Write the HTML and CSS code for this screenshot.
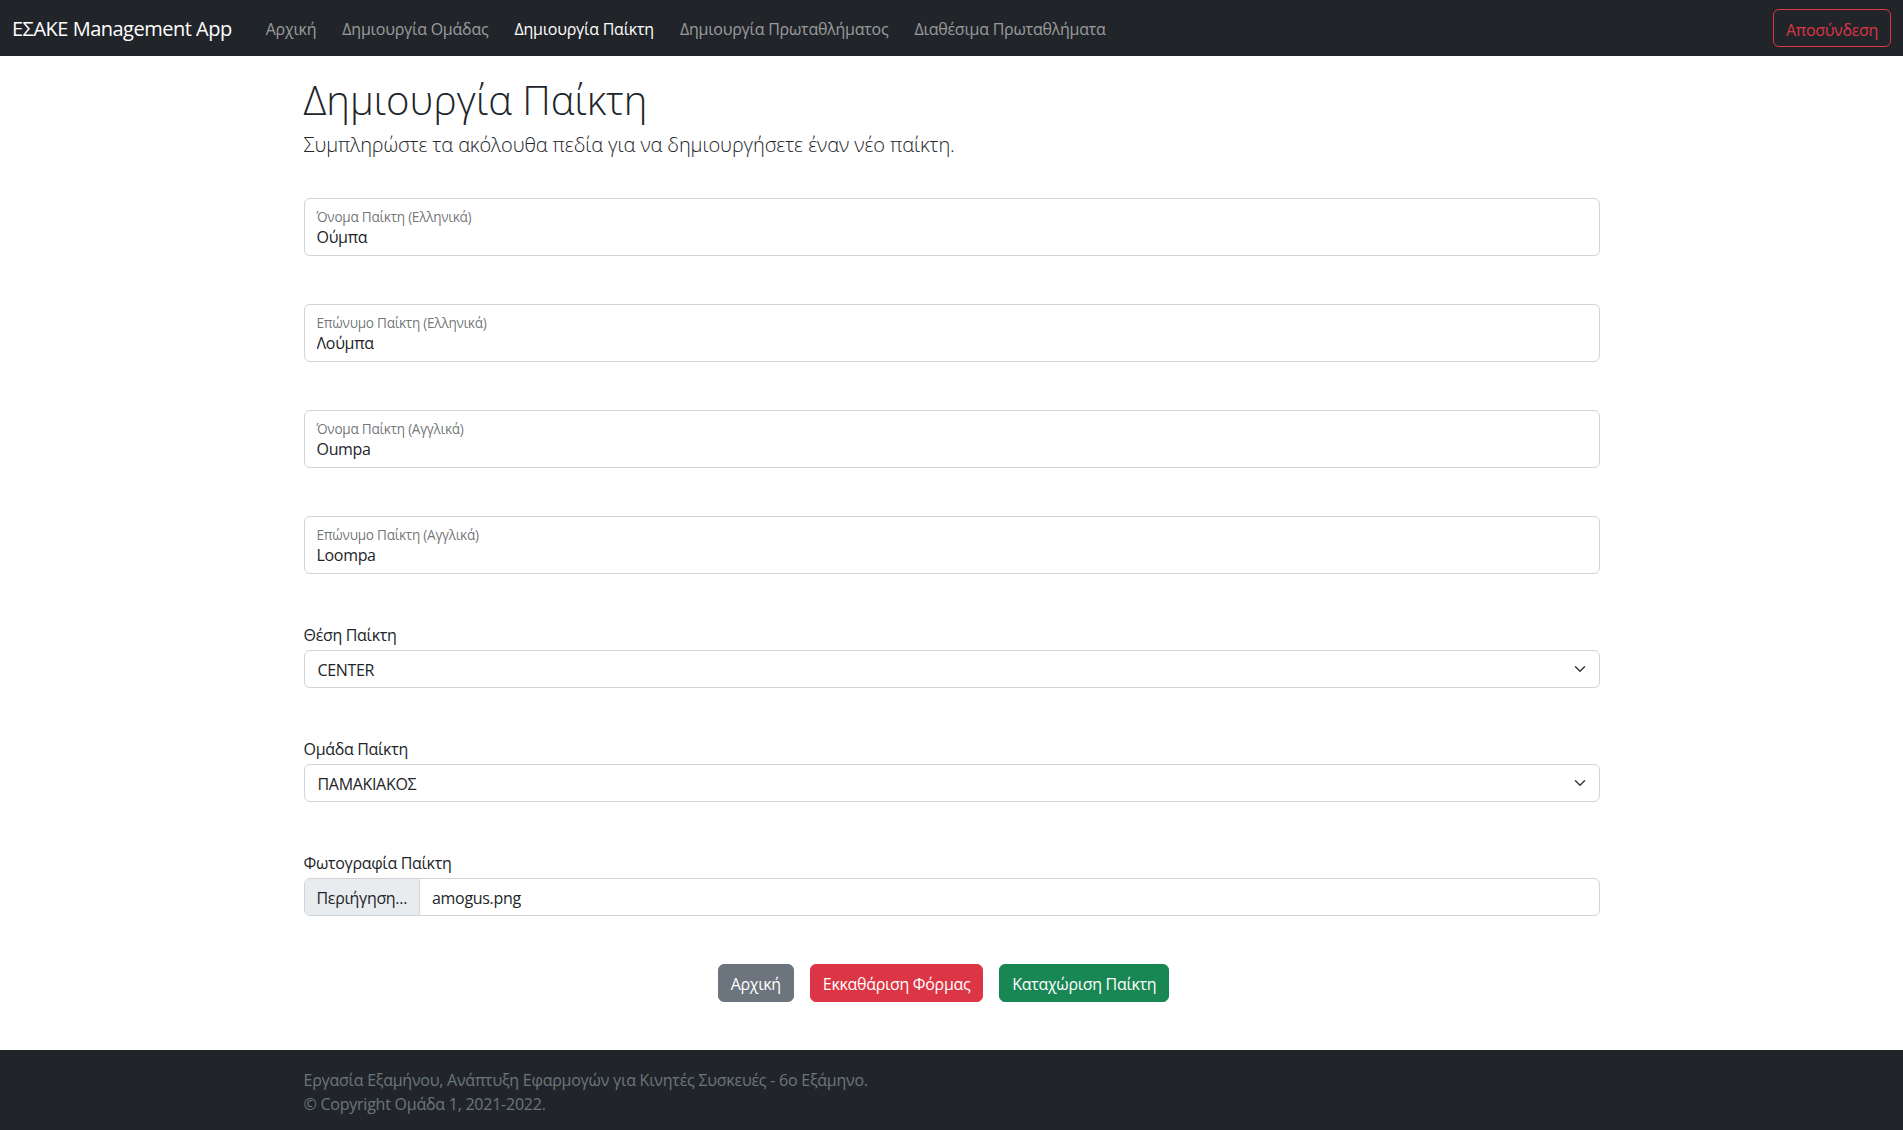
FILE: index.html
```html
<!DOCTYPE html>
<html lang="el">
<head>
<meta charset="utf-8">
<title>Δημιουργία Παίκτη</title>
<link rel="stylesheet" href="styles.css">
</head>
<body>
<nav class="navbar">
  <a class="brand" href="#">ΕΣΑΚΕ Management App</a>
  <ul class="nav-links">
    <li><a class="nav-link" href="#">Αρχική</a></li>
    <li><a class="nav-link" href="#">Δημιουργία Ομάδας</a></li>
    <li><a class="nav-link active" href="#">Δημιουργία Παίκτη</a></li>
    <li><a class="nav-link" href="#">Δημιουργία Πρωταθλήματος</a></li>
    <li><a class="nav-link" href="#">Διαθέσιμα Πρωταθλήματα</a></li>
  </ul>
  <button class="btn btn-outline-danger" type="button">Αποσύνδεση</button>
</nav>

<main class="container">
  <h1 class="page-title">Δημιουργία Παίκτη</h1>
  <p class="lead">Συμπληρώστε τα ακόλουθα πεδία για να δημιουργήσετε έναν νέο παίκτη.</p>

  <form class="player-form">
    <div class="float-box">
      <label class="float-label" for="fn-el">Όνομα Παίκτη (Ελληνικά)</label>
      <input class="float-input" id="fn-el" type="text" value="Ούμπα">
    </div>
    <div class="float-box">
      <label class="float-label" for="ln-el">Επώνυμο Παίκτη (Ελληνικά)</label>
      <input class="float-input" id="ln-el" type="text" value="Λούμπα">
    </div>
    <div class="float-box">
      <label class="float-label" for="fn-en">Όνομα Παίκτη (Αγγλικά)</label>
      <input class="float-input" id="fn-en" type="text" value="Oumpa">
    </div>
    <div class="float-box last">
      <label class="float-label" for="ln-en">Επώνυμο Παίκτη (Αγγλικά)</label>
      <input class="float-input" id="ln-en" type="text" value="Loompa">
    </div>

    <div class="field-group">
      <label class="form-label" for="pos">Θέση Παίκτη</label>
      <div class="select-wrap">
        <select class="form-select" id="pos">
          <option>CENTER</option>
        </select>
        <svg class="chevron" viewBox="0 0 16 16" width="16" height="12" aria-hidden="true"><path d="m2 5 6 6 6-6" fill="none" stroke="#343a40" stroke-width="2" stroke-linecap="round" stroke-linejoin="round"/></svg>
      </div>
    </div>

    <div class="field-group">
      <label class="form-label" for="team">Ομάδα Παίκτη</label>
      <div class="select-wrap">
        <select class="form-select" id="team">
          <option>ΠΑΜΑΚΙΑΚΟΣ</option>
        </select>
        <svg class="chevron" viewBox="0 0 16 16" width="16" height="12" aria-hidden="true"><path d="m2 5 6 6 6-6" fill="none" stroke="#343a40" stroke-width="2" stroke-linecap="round" stroke-linejoin="round"/></svg>
      </div>
    </div>

    <div class="field-group file-group">
      <label class="form-label" for="photo">Φωτογραφία Παίκτη</label>
      <div class="file-input" id="photo">
        <span class="file-btn">Περιήγηση...</span>
        <span class="file-name">amogus.png</span>
      </div>
    </div>

    <div class="actions">
      <button class="btn btn-secondary" type="button">Αρχική</button>
      <button class="btn btn-danger" type="reset">Εκκαθάριση Φόρμας</button>
      <button class="btn btn-success" type="submit">Καταχώριση Παίκτη</button>
    </div>
  </form>
</main>

<footer class="footer">
  <div class="container">
    <div class="footer-line">Εργασία Εξαμήνου, Ανάπτυξη Εφαρμογών για Κινητές Συσκευές - 6ο Εξάμηνο.</div>
    <div class="footer-line">© Copyright Ομάδα 1, 2021-2022.</div>
  </div>
</footer>
</body>
</html>
```
FILE: styles.css
```css
* { box-sizing: border-box; }

html, body {
  margin: 0;
  padding: 0;
}

body {
  font-family: "Open Sans", "Noto Sans", sans-serif;
  font-size: 16px;
  line-height: 24px;
  color: #212529;
  background: #fff;
  letter-spacing: -0.02em;
}

/* ---------- navbar ---------- */
.navbar {
  height: 56px;
  background: #212529;
  display: flex;
  align-items: center;
  padding: 0 12px;
}

.brand {
  color: #fff;
  font-size: 20px;
  line-height: 30px;
  padding-top: 1px;
  text-decoration: none;
  letter-spacing: -0.025em;
  margin-right: 26px;
}

.nav-links {
  list-style: none;
  margin: 0;
  padding: 0;
  display: flex;
  gap: 10px;
}

.nav-link {
  display: block;
  padding: 9px 8px 7px;
  color: rgba(255, 255, 255, 0.55);
  text-decoration: none;
  font-size: 16px;
  line-height: 24px;
  letter-spacing: -0.015em;
}

.nav-link.active { color: #fff; }

.navbar .btn-outline-danger { margin-left: auto; }

/* ---------- buttons ---------- */
.btn {
  font-family: inherit;
  font-size: 16px;
  line-height: 24px;
  letter-spacing: -0.02em;
  padding: 7px 12px 5px;
  border: 1px solid transparent;
  border-radius: 6px;
  cursor: pointer;
  height: 38px;
}

.btn-outline-danger {
  color: #dc3545;
  border-color: #dc3545;
  background: transparent;
  padding-top: 8px;
  padding-bottom: 4px;
}

.btn-secondary { background: #6c757d; border-color: #6c757d; color: #fff; }
.btn-danger { background: #dc3545; border-color: #dc3545; color: #fff; }
.btn-success { background: #198754; border-color: #198754; color: #fff; }

/* ---------- main ---------- */
.container {
  width: 1320px;
  margin: 0 auto;
  padding: 0 12px;
}

.page-title {
  font-size: 40px;
  line-height: 48px;
  font-weight: 300;
  letter-spacing: 0;
  margin: 20px 0 6px;
}

.lead {
  font-size: 20px;
  line-height: 30px;
  font-weight: 300;
  letter-spacing: -0.005em;
  margin: 0 0 38px;
}

.player-form { margin: 0; }

.float-box {
  height: 58px;
  border: 1px solid #ced4da;
  border-radius: 6px;
  padding: 10px 12px 0;
  margin-bottom: 48px;
  display: flex;
  flex-direction: column;
}

.float-box.last { margin-bottom: 44px; }

.float-label {
  font-size: 13.6px;
  line-height: 16px;
  color: rgba(33, 37, 41, 0.65);
  letter-spacing: -0.02em;
}

.float-input {
  border: 0;
  outline: 0;
  padding: 0;
  margin-top: 0;
  font-family: inherit;
  font-size: 16px;
  line-height: 24px;
  height: 24px;
  color: #212529;
  letter-spacing: -0.02em;
  background: transparent;
}

.field-group { margin-bottom: 44px; }
.field-group.file-group { margin-bottom: 48px; }

.form-label {
  display: block;
  padding-top: 5px;
  margin-bottom: 3px;
}

.select-wrap { position: relative; }

.form-select {
  display: block;
  width: 100%;
  height: 38px;
  appearance: none;
  -webkit-appearance: none;
  border: 1px solid #ced4da;
  border-radius: 6px;
  padding: 7px 36px 5px 13px;
  font-family: inherit;
  font-size: 16px;
  line-height: 24px;
  letter-spacing: -0.02em;
  color: #212529;
  background: #fff;
}

.chevron {
  position: absolute;
  right: 12px;
  top: 13px;
  pointer-events: none;
}

.file-input {
  display: flex;
  height: 38px;
  border: 1px solid #ced4da;
  border-radius: 6px;
  overflow: hidden;
}

.file-btn {
  background: #e9ecef;
  border-right: 1px solid #ced4da;
  padding: 7px 12px 5px;
  line-height: 24px;
}

.file-name {
  padding: 7px 12px 5px;
  line-height: 24px;
}

.actions {
  display: flex;
  justify-content: center;
  gap: 16px;
  padding-right: 16px;
  margin-bottom: 48px;
}

/* ---------- footer ---------- */
.footer {
  background: #212529;
  color: #6c757d;
  padding: 18px 0 14px;
}

.footer-line {
  line-height: 24px;
  letter-spacing: -0.015em;
}
```
